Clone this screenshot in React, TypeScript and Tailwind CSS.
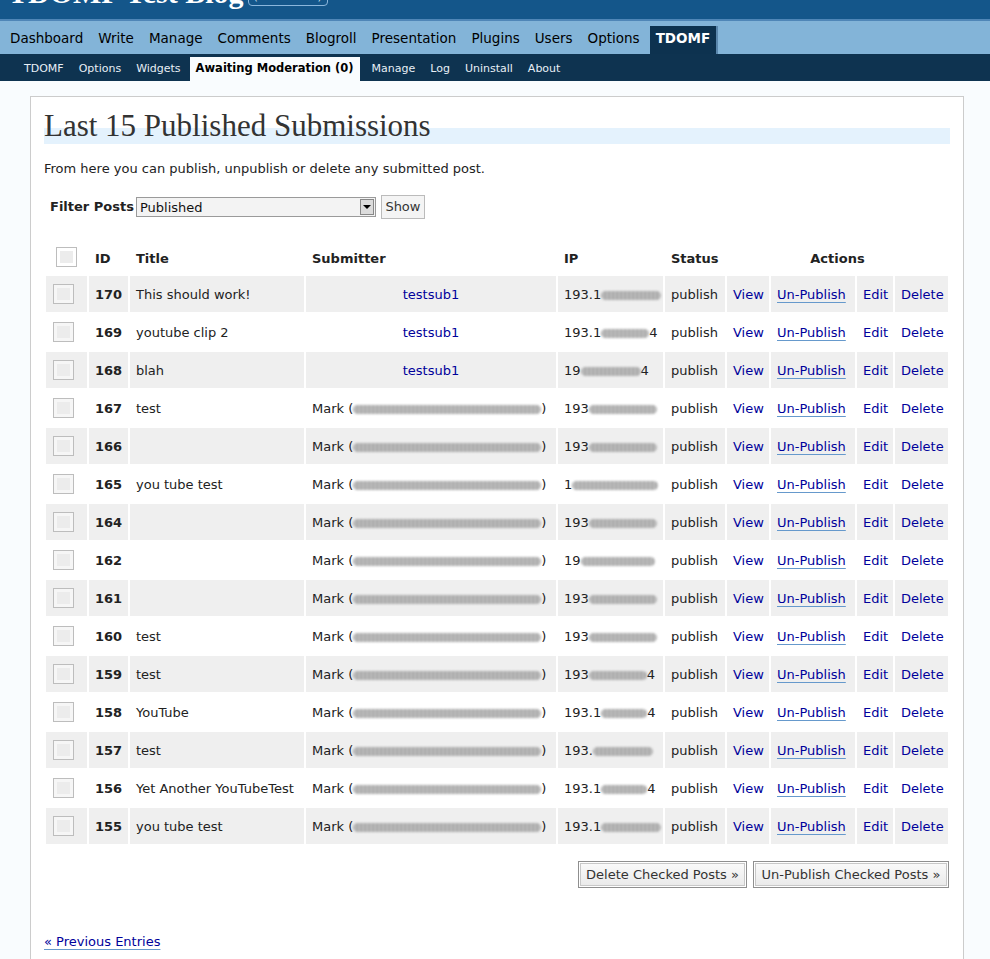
import React from "react";

type Row = {
  id: number;
  title: string;
  sub: string | null;
  mail: number;
  ip: [string, number, string];
};

const rows: Row[] = [
  { id: 170, title: "This should work!", sub: "testsub1", mail: 0, ip: ["193.1", 60, ""] },
  { id: 169, title: "youtube clip 2", sub: "testsub1", mail: 0, ip: ["193.1", 48, "4"] },
  { id: 168, title: "blah", sub: "testsub1", mail: 0, ip: ["19", 60, "4"] },
  { id: 167, title: "test", sub: null, mail: 188, ip: ["193", 68, ""] },
  { id: 166, title: "", sub: null, mail: 188, ip: ["193", 68, ""] },
  { id: 165, title: "you tube test", sub: null, mail: 188, ip: ["1", 86, ""] },
  { id: 164, title: "", sub: null, mail: 188, ip: ["193", 68, ""] },
  { id: 162, title: "", sub: null, mail: 188, ip: ["19", 74, ""] },
  { id: 161, title: "", sub: null, mail: 188, ip: ["193", 68, ""] },
  { id: 160, title: "test", sub: null, mail: 188, ip: ["193", 68, ""] },
  { id: 159, title: "test", sub: null, mail: 188, ip: ["193", 58, "4"] },
  { id: 158, title: "YouTube", sub: null, mail: 188, ip: ["193.1", 46, "4"] },
  { id: 157, title: "test", sub: null, mail: 188, ip: ["193.", 60, ""] },
  { id: 156, title: "Yet Another YouTubeTest", sub: null, mail: 188, ip: ["193.1", 46, "4"] },
  { id: 155, title: "you tube test", sub: null, mail: 188, ip: ["193.1", 60, ""] },
];

function Blur({ w }: { w: number }) {
  return (
    <span
      className="inline-block h-[9px] rounded-full bg-[repeating-linear-gradient(90deg,#8f8f8f_0px,#c4c4c4_2px,#9a9a9a_4px)] align-middle opacity-90 blur-[0.8px]"
      style={{ width: w }}
    />
  );
}

function Box({ header }: { header?: boolean }) {
  return (
    <div
      className={
        "h-[20px] w-[21px] border border-[#bdbdbd] p-[3px] " +
        (header ? "bg-white" : "bg-[#f6f6f6]")
      }
    >
      <div className="h-full w-full bg-[#ececec]" />
    </div>
  );
}

const mainMenu = [
  "Dashboard",
  "Write",
  "Manage",
  "Comments",
  "Blogroll",
  "Presentation",
  "Plugins",
  "Users",
  "Options",
];

const subMenu = ["TDOMF", "Options", "Widgets"];
const subMenu2 = ["Manage", "Log", "Uninstall", "About"];

const link = "text-[#00019b]";

export default function App() {
  return (
    <div className="min-h-[959px] bg-[#f9fcfe] font-['DejaVu_Sans',sans-serif] text-[#333]">
      {/* blog header */}
      <div className="h-[19px] overflow-hidden bg-[#14568a]">
        <div className="flex items-start pl-[8px]">
          <h1 className="mt-[-22px] font-['Liberation_Serif',serif] text-[30px] font-bold leading-[30px] text-white">
            TDOMF Test Blog
          </h1>
          <span className="ml-[4px] mt-[-12px] h-[18px] rounded-[4px] border border-[#8bb6dc] px-[5px] text-[11px] leading-[16px] text-[#d8e8f6]">
            (View site »)
          </span>
        </div>
      </div>
      <div className="h-[2px] bg-[#4f86b7]" />

      {/* admin menu */}
      <nav className="flex h-[33px] items-end bg-[#83b4d8] pl-[3px] text-[13.5px] text-black">
        {mainMenu.map((m) => (
          <div key={m} className="pb-[8px] pl-[7px] pr-[8px] pt-[4px] leading-[16px]">
            {m}
          </div>
        ))}
        <div className="ml-[2px] border-r-2 border-[#5a87ad] bg-[#0d324f] pb-[8px] pl-[6px] pr-[6px] pt-[4px] font-bold leading-[16px] text-white">
          TDOMF
        </div>
      </nav>

      {/* sub menu */}
      <div className="flex h-[27px] items-end gap-[3px] bg-[#0e3350] pl-[18px] text-[11px] text-[#e8eff6]">
        {subMenu.map((m) => (
          <div key={m} className="flex h-[24px] items-center px-[6px]">
            {m}
          </div>
        ))}
        <div className="mr-[3px] flex h-[24px] items-center bg-[#f9fcfe] px-[6px] text-[11.5px] font-bold text-black">
          Awaiting Moderation (0)
        </div>
        {subMenu2.map((m) => (
          <div key={m} className="flex h-[24px] items-center px-[6px]">
            {m}
          </div>
        ))}
      </div>

      {/* content */}
      <div className="pl-[30px] pt-[15px]">
        <div className="w-[934px] border border-[#cccccc] bg-white px-[13px] pb-[60px]">
          <h2 className="mt-[26px] border-b-[16px] border-[#e4f2fd] font-['Liberation_Serif',serif] text-[31px] font-normal leading-[5px] text-[#333]">
            Last 15 Published Submissions
          </h2>

          <p className="mt-[16px] text-[13px] leading-[18px] text-[#222]">
            From here you can publish, unpublish or delete any submitted post.
          </p>

          <div className="mt-[17px] flex h-[24px] items-center text-[13px]">
            <span className="ml-[6px] font-bold text-[#222]">Filter Posts</span>
            <div className="ml-[2px] flex h-[20px] w-[240px] items-stretch border border-[#9a9a9a] bg-[#f3f3f3]">
              <span className="flex-1 pl-[3px] leading-[20px] text-[#111]">Published</span>
              <span className="m-[1px] flex w-[14px] items-center justify-center border border-[#888] bg-[#dcdcdc]">
                <span className="h-0 w-0 border-x-[4px] border-t-[4px] border-x-transparent border-t-black" />
              </span>
            </div>
            <button className="ml-[5px] h-[24px] w-[44px] border border-[#bbbbbb] bg-[#f4f4f4] text-[13px] text-[#333]">
              Show
            </button>
          </div>

          <table className="mt-[25px] w-[906px] table-fixed border-separate border-spacing-[2px] text-[13px]">
            <colgroup>
              <col className="w-[41px]" />
              <col className="w-[39px]" />
              <col className="w-[174px]" />
              <col className="w-[250px]" />
              <col className="w-[105px]" />
              <col className="w-[60px]" />
              <col className="w-[42px]" />
              <col className="w-[84px]" />
              <col className="w-[36px]" />
              <col className="w-[53px]" />
            </colgroup>
            <thead>
              <tr className="h-[28px] text-left font-bold text-[#222]">
                <th className="pl-[10px] pt-[1px] align-top">
                  <Box header />
                </th>
                <th className="px-[6px] pt-[3px] text-left align-top">ID</th>
                <th className="px-[6px] pt-[3px] text-left align-top">Title</th>
                <th className="px-[6px] pt-[3px] text-left align-top">Submitter</th>
                <th className="px-[6px] pt-[3px] text-left align-top">IP</th>
                <th className="px-[6px] pt-[3px] text-left align-top">Status</th>
                <th colSpan={4} className="px-[6px] pt-[3px] text-center align-top">
                  Actions
                </th>
              </tr>
            </thead>
            <tbody>
              {rows.map((r, i) => {
                const bg = i % 2 === 0 ? "bg-[#efefef]" : "bg-white";
                const td = "h-[36px] px-[6px] pt-[1px] align-middle whitespace-nowrap overflow-hidden " + bg;
                return (
                  <tr key={r.id}>
                    <td className={"h-[36px] pl-[7px] align-middle " + bg}>
                      <Box />
                    </td>
                    <td className={td + " font-bold text-[#222]"}>{r.id}</td>
                    <td className={td + " text-[#222]"}>{r.title}</td>
                    {r.sub ? (
                      <td className={td + " text-center"}>
                        <span className={link}>{r.sub}</span>
                      </td>
                    ) : (
                      <td className={td + " text-[#222]"}>
                        Mark (
                        <Blur w={r.mail} />)
                      </td>
                    )}
                    <td className={td + " pr-[2px] text-[#222]"}>
                      {r.ip[0]}
                      <Blur w={r.ip[1]} />
                      {r.ip[2]}
                    </td>
                    <td className={td + " text-[#222]"}>publish</td>
                    <td className={td}>
                      <span className={link}>View</span>
                    </td>
                    <td className={td}>
                      <span className={link + " underline decoration-[#6699cc] underline-offset-[3px]"}>
                        Un-Publish
                      </span>
                    </td>
                    <td className={td}>
                      <span className={link}>Edit</span>
                    </td>
                    <td className={td}>
                      <span className={link}>Delete</span>
                    </td>
                  </tr>
                );
              })}
            </tbody>
          </table>

          <div className="mt-[15px] flex justify-end gap-[6px] pr-[1px]">
            <button className="h-[27px] w-[169px] border border-[#8f8f8f] bg-[linear-gradient(#fbfbfb,#e9e9e9)] text-[13px] text-[#333] shadow-[inset_0_0_0_1px_#ffffff,inset_0_0_0_2px_#c8c8c8]">
              Delete Checked Posts »
            </button>
            <button className="h-[27px] w-[196px] border border-[#8f8f8f] bg-[linear-gradient(#fbfbfb,#e9e9e9)] text-[13px] text-[#333] shadow-[inset_0_0_0_1px_#ffffff,inset_0_0_0_2px_#c8c8c8]">
              Un-Publish Checked Posts »
            </button>
          </div>

          <div className="mt-[45px] text-[13px] leading-[18px]">
            <span className={link + " underline decoration-[#6699cc] underline-offset-[3px]"}>
              « Previous Entries
            </span>
          </div>
        </div>
      </div>
    </div>
  );
}
